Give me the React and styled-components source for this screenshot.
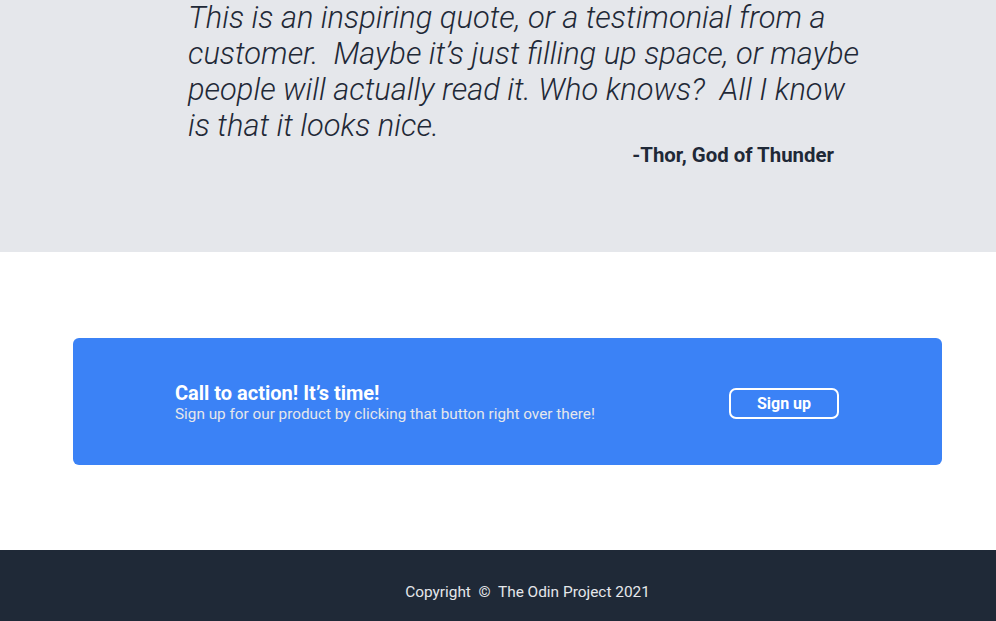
import styled, { createGlobalStyle } from "styled-components";

const GlobalStyle = createGlobalStyle`
  html, body {
    margin: 0;
    padding: 0;
    overflow: hidden;
  }
  body {
    font-family: Roboto, "Liberation Sans", sans-serif;
    background: #ffffff;
  }
`;

const QuoteSection = styled.section`
  background: #e5e7eb;
  height: 252px;
  padding-left: 188px;
  box-sizing: border-box;
`;

const QuoteBox = styled.div`
  width: 680px;
  display: flex;
  flex-direction: column;
`;

const QuoteText = styled.p`
  margin: 0;
  font-size: 30.85px;
  line-height: 36px;
  font-weight: 300;
  font-style: italic;
  color: #1f2937;
  white-space: pre-wrap;
`;

const Author = styled.p`
  margin: -1px 0 0;
  align-self: flex-end;
  padding-right: 34px;
  font-size: 20.4px;
  font-weight: 700;
  color: #1f2937;
`;

const CtaSection = styled.section`
  padding: 86px 0 85px 73px;
`;

const CtaCard = styled.div`
  width: 869px;
  height: 127px;
  box-sizing: border-box;
  background: #3b82f6;
  border-radius: 6px;
  display: flex;
  align-items: center;
  justify-content: space-between;
  padding: 0 103px 0 102px;
`;

const CtaText = styled.div`
  display: flex;
  flex-direction: column;
  margin-top: 1px;
`;

const CtaTitle = styled.h2`
  margin: 0;
  font-size: 20px;
  line-height: 24px;
  font-weight: 700;
  color: #ffffff;
`;

const CtaSub = styled.p`
  margin: 0;
  font-size: 15.3px;
  line-height: 18px;
  color: #e5e7eb;
`;

const SignUpButton = styled.button`
  width: 110px;
  height: 31px;
  border: 2px solid #ffffff;
  border-radius: 7px;
  background: transparent;
  color: #ffffff;
  font-family: Roboto, "Liberation Sans", sans-serif;
  font-size: 16px;
  font-weight: 700;
  margin-top: 4px;
  cursor: pointer;
`;

const Footer = styled.footer`
  background: #1f2937;
  height: 80px;
  padding-left: 59px;
  padding-top: 33px;
  box-sizing: border-box;
  text-align: center;
  color: #e5e7eb;
  font-size: 15.4px;
  white-space: pre;
`;

export default function App() {
  return (
    <>
      <GlobalStyle />
      <QuoteSection>
        <QuoteBox>
          <QuoteText>
            {"This is an inspiring quote, or a testimonial from a customer.  Maybe it’s just filling up space, or maybe people will actually read it. Who knows?  All I know is that it looks nice."}
          </QuoteText>
          <Author>-Thor, God of Thunder</Author>
        </QuoteBox>
      </QuoteSection>
      <CtaSection>
        <CtaCard>
          <CtaText>
            <CtaTitle>Call to action! It’s time!</CtaTitle>
            <CtaSub>Sign up for our product by clicking that button right over there!</CtaSub>
          </CtaText>
          <SignUpButton>Sign up</SignUpButton>
        </CtaCard>
      </CtaSection>
      <Footer>{"Copyright  ©  The Odin Project 2021"}</Footer>
    </>
  );
}
